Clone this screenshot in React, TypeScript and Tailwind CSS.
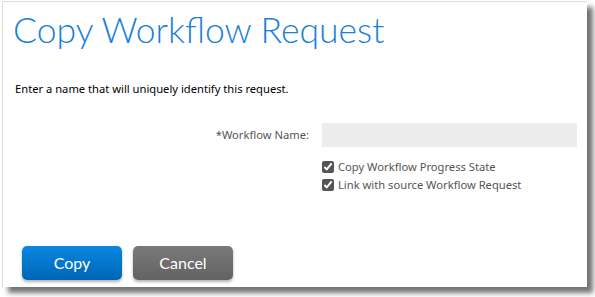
export default function App() {
  return (
    <div className="w-[595px] h-[297px] bg-white relative overflow-hidden">
      <div className="absolute left-[2px] top-[1px] w-[585px] h-[286px] bg-white border-l border-t border-[#dcdcdc] shadow-[6px_6px_5px_rgba(0,0,0,0.55)] flex flex-col">
        <h1 className="pl-[10px] pt-[6px] text-[#1a80d8] text-[35.5px] leading-[44px] font-light" style={{ fontFamily: "Lato, sans-serif" }}>
          Copy Workflow Request
        </h1>
        <p className="pl-[12px] mt-[29px] text-[11.2px] leading-[16px] text-black" style={{ fontFamily: "'Noto Sans', sans-serif" }}>
          Enter a name that will uniquely identify this request.
        </p>
        <div className="flex items-center mt-[26px]" style={{ fontFamily: "'Noto Sans', sans-serif" }}>
          <div className="w-[306px] text-right text-[11.2px] text-[#555]">*Workflow Name:</div>
          <div className="ml-[13px] w-[255px] h-[24px] bg-[#ececec]" />
        </div>
        <div className="ml-[319px] mt-[12px] flex flex-col gap-[2px] text-[11.2px] text-[#555]" style={{ fontFamily: "'Noto Sans', sans-serif" }}>
          <label className="flex items-center gap-[4px] leading-[16px]">
            <input type="checkbox" defaultChecked className="w-[12px] h-[12px] m-0 accent-[#555]" />
            Copy Workflow Progress State
          </label>
          <label className="flex items-center gap-[4px] leading-[16px]">
            <input type="checkbox" defaultChecked className="w-[12px] h-[12px] m-0 accent-[#555]" />
            Link with source Workflow Request
          </label>
        </div>
        <div className="flex gap-[11px] ml-[19px] mt-[53px]" style={{ fontFamily: "Lato, sans-serif" }}>
          <button className="w-[100px] h-[34px] rounded-[5px] bg-gradient-to-b from-[#0a88e0] to-[#0066b6] text-white text-[16px] shadow-[0_2px_3px_rgba(0,0,0,0.3)]">
            Copy
          </button>
          <button className="w-[100px] h-[34px] rounded-[5px] bg-gradient-to-b from-[#7a7a7a] to-[#626262] text-white text-[16px] shadow-[0_2px_3px_rgba(0,0,0,0.3)]">
            Cancel
          </button>
        </div>
      </div>
    </div>
  );
}
